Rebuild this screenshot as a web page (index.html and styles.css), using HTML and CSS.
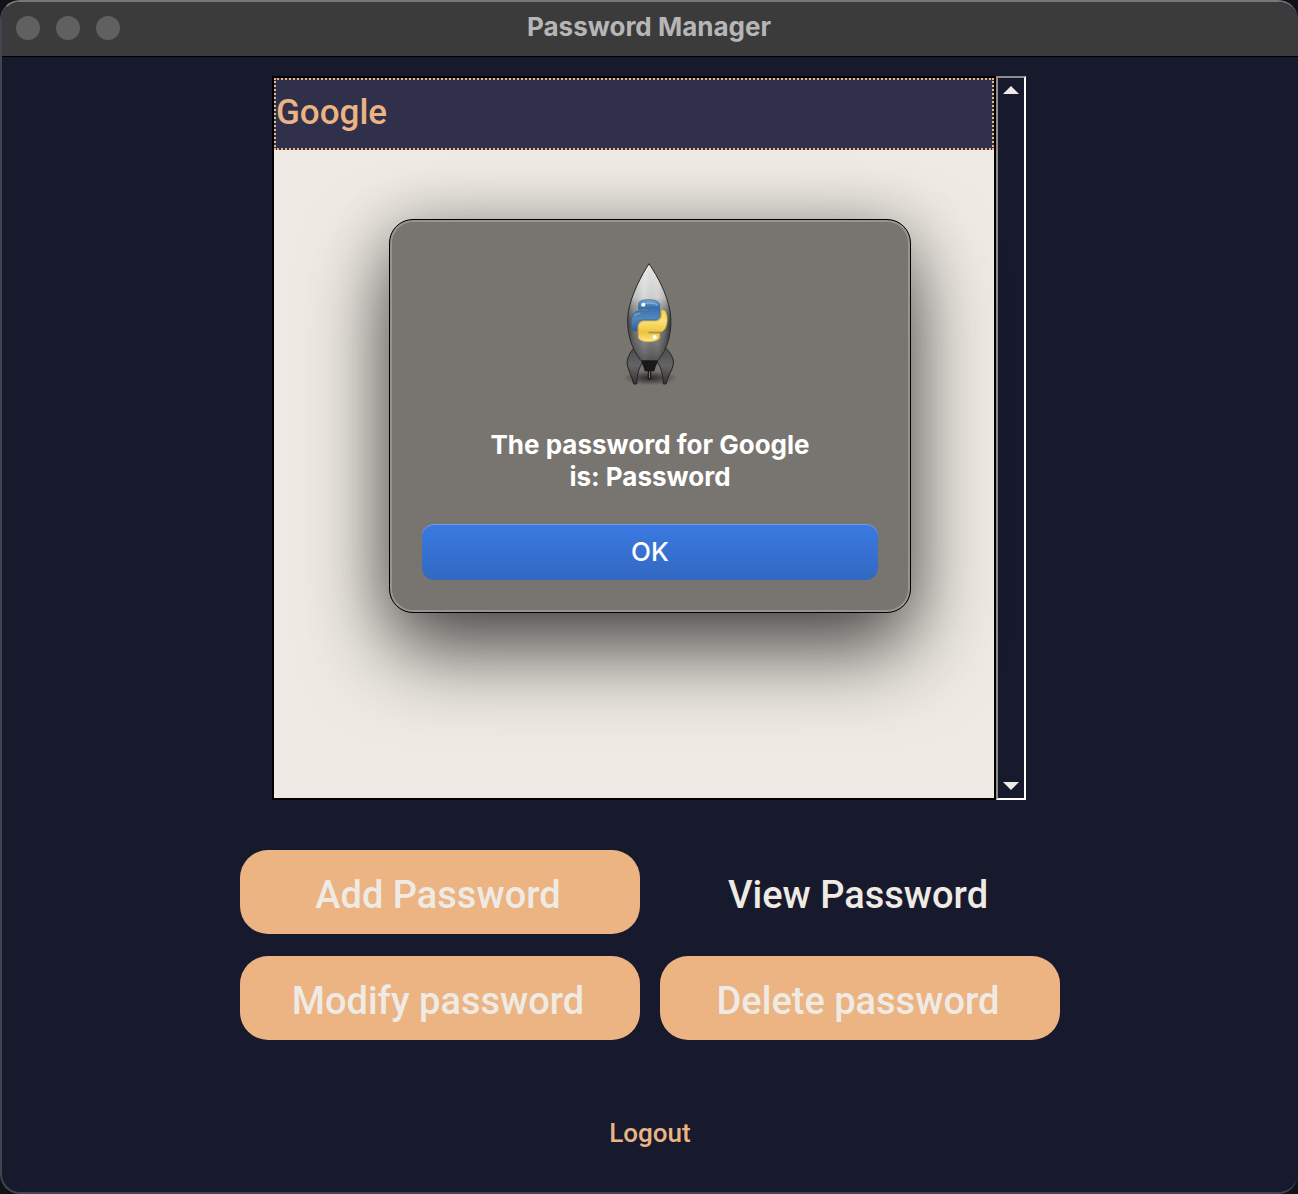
FILE: index.html
```html
<!DOCTYPE html>
<html lang="en">
<head>
<meta charset="utf-8">
<title>Password Manager</title>
<link rel="stylesheet" href="styles.css">
</head>
<body>
<div class="window">
  <header class="titlebar">
    <div class="lights"><span class="light"></span><span class="light"></span><span class="light"></span></div>
    <h1 class="title">Password Manager</h1>
  </header>
  <main class="content">
    <div class="vault">
      <ul class="list" role="listbox" aria-label="Passwords">
        <li class="item" role="option" aria-selected="true">Google</li>
      </ul>
      <div class="scrollbar">
        <button class="arrow" type="button" aria-label="Scroll up"><svg width="16" height="8" viewBox="0 0 16 8"><path d="M0 8 8 0l8 8z"/></svg></button>
        <button class="arrow" type="button" aria-label="Scroll down"><svg width="16" height="8" viewBox="0 0 16 8"><path d="M0 0h16L8 8z"/></svg></button>
      </div>
    </div>
    <div class="actions">
      <button class="action" type="button">Add Password</button>
      <button class="action pressed" type="button">View Password</button>
      <button class="action" type="button">Modify password</button>
      <button class="action" type="button">Delete password</button>
    </div>
    <button class="logout" type="button">Logout</button>

    <dialog class="alert" open aria-labelledby="message">
      <svg class="rocket" viewBox="0 0 360 435" aria-hidden="true">
        <defs>
          <linearGradient id="hull" x1="0" x2="1" y1="0" y2="0">
            <stop offset="0" stop-color="#3f3f3f"/><stop offset=".14" stop-color="#777"/><stop offset=".38" stop-color="#b0b0b0"/><stop offset=".52" stop-color="#9a9a9a"/><stop offset=".7" stop-color="#a2a2a2"/><stop offset=".88" stop-color="#676767"/><stop offset="1" stop-color="#303030"/>
          </linearGradient>
          <linearGradient id="shine" x1="0" x2="0" y1="0" y2="1">
            <stop offset="0" stop-color="#fff" stop-opacity=".75"/><stop offset=".35" stop-color="#fff" stop-opacity=".5"/><stop offset=".65" stop-color="#444" stop-opacity=".15"/><stop offset="1" stop-color="#222" stop-opacity=".6"/>
          </linearGradient>
          <linearGradient id="blue" x1="0" x2="0" y1="0" y2="1">
            <stop offset="0" stop-color="#79a8d8"/><stop offset=".25" stop-color="#3670ad"/><stop offset=".6" stop-color="#5388bd"/><stop offset="1" stop-color="#2c5f96"/>
          </linearGradient>
          <linearGradient id="yellow" x1="0" x2="0" y1="0" y2="1">
            <stop offset="0" stop-color="#f6d34e"/><stop offset=".35" stop-color="#f9e07a"/><stop offset=".7" stop-color="#efc43c"/><stop offset="1" stop-color="#fae68c"/>
          </linearGradient>
          <linearGradient id="fin" x1="0" x2="0" y1="0" y2="1">
            <stop offset="0" stop-color="#4a4a4a"/><stop offset=".5" stop-color="#646464"/><stop offset="1" stop-color="#333"/>
          </linearGradient>
          <radialGradient id="ground"><stop offset="0" stop-opacity=".65"/><stop offset="1" stop-opacity="0"/></radialGradient>
        </defs>
        <ellipse cx="180" cy="384" rx="82" ry="22" fill="url(#ground)"/>
        <path d="M134 292c-16 16-25 38-22 53 4 20 15 36 19 57h9c2-31 6-53 23-70z" fill="url(#fin)" stroke="#222" stroke-width="3"/>
        <path d="M225 292c17 16 27 35 25 50-4 22-17 36-22 60h-8c-2-31-6-53-22-70z" fill="url(#fin)" stroke="#222" stroke-width="3"/>
        <path d="M173 358h11v30h-11z" fill="#1c1c1c"/><path d="M177 362h3v22h-3z" fill="#777"/>
        <path d="M177 41C154 77 124 133 115 185c-8 52 7 111 38 147h51c31-37 45-95 36-149-9-51-36-102-63-142z" fill="url(#hull)"/>
        <path d="M177 41C154 77 124 133 115 185c-8 52 7 111 38 147h51c31-37 45-95 36-149-9-51-36-102-63-142z" fill="url(#shine)" stroke="#292929" stroke-width="3"/>
        <path d="M153 332h51l-7 18-4 14h-29l-4-14z" fill="#191919"/>
        <path d="M147 182h30v-4h-31v-17c0-16 60-16 63 1v31c0 11-8 17-18 17h-31c-12 0-20 8-20 18v15h-7c-12-4-18-56 14-61z" fill="url(#blue)" stroke="#315e8c" stroke-width="2"/>
        <path d="M214 181h8c13 7 15 56-7 64h-39v5h33v11c0 18-63 20-64 0v-30c0-12 9-18 19-18h31c13 0 19-8 19-18z" fill="url(#yellow)" stroke="#d2ae3b" stroke-width="2"/>
        <path d="M153 169c4-12 43-13 49-3M133 197c5-6 10-7 18-7" fill="none" stroke="#a8caeb" stroke-width="4" opacity=".6"/>
        <circle cx="160" cy="164" r="6" fill="#fff"/><circle cx="194" cy="261" r="6" fill="#fff"/>
      </svg>
      <p class="message" id="message">The password for Google<br>is: Password</p>
      <button class="ok" type="button">OK</button>
    </dialog>
  </main>
</div>
</body>
</html>
```
FILE: styles.css
```css
* { box-sizing: border-box; }

body {
  margin: 0;
  background: #111218;
  color: #efebe4;
  font-family: Roboto, "Liberation Sans", sans-serif;
}

button {
  padding: 0;
  border: 0;
  background: none;
  color: inherit;
  font: inherit;
}

.window {
  display: flex;
  flex-direction: column;
  min-height: 100vh;
  border: 2px solid #42444f;
  border-top-color: #777;
  border-right: 0;
  border-radius: 20px;
  background: #17192d;
  overflow: hidden;
}

.titlebar {
  display: grid;
  grid-template-columns: 1fr auto 1fr;
  align-items: center;
  height: 55px;
  padding: 0 16px 2px 14px;
  border-bottom: 1px solid #000;
  background: #3b3b3b;
}

.lights { display: flex; gap: 16px; }

.light {
  width: 24px;
  height: 24px;
  border-radius: 50%;
  background: #606060;
}

.title {
  margin: 0;
  padding-bottom: 2px;
  color: #b6b6b6;
  font: 700 26px/30px Inter, sans-serif;
}

.content {
  position: relative;
  display: flex;
  flex: 1;
  flex-direction: column;
  align-items: center;
  padding: 19px 16px 36px;
}

.vault {
  display: flex;
  padding-right: 2px;
}

.list {
  width: 724px;
  height: 724px;
  margin: 0;
  padding: 0;
  border: 2px solid #000;
  background: #efebe4;
  list-style: none;
}

.item {
  height: 72px;
  border: 2px dotted #ecb383;
  background: #30304b;
  color: #ecb383;
  font-size: 35px;
  font-weight: 500;
  line-height: 66px;
}

.scrollbar {
  display: flex;
  flex-direction: column;
  justify-content: space-between;
  width: 30px;
  border: 2px solid #fff;
  border-top-color: #8f8d88;
  border-left-color: #8f8d88;
}

.arrow {
  display: grid;
  place-items: center;
  height: 24px;
  fill: #efebe4;
}

.actions {
  display: grid;
  grid-template-columns: repeat(2, 400px);
  grid-auto-rows: 84px;
  gap: 22px 20px;
  margin-top: 50px;
}

.action {
  padding: 6px 4px 0 0;
  border-radius: 28px;
  background: #ecb383;
  font-size: 38px;
  font-weight: 500;
}

.pressed { background: none; }

.logout {
  margin-top: 76px;
  color: #ecb383;
  font-size: 26px;
  font-weight: 500;
  line-height: 34px;
}

.alert {
  position: absolute;
  inset: 162px 0 auto;
  display: flex;
  flex-direction: column;
  align-items: center;
  width: 522px;
  margin: 0 auto;
  padding: 30px 30px 32px;
  border: 1px solid #000;
  border-radius: 24px;
  background: #787570;
  box-shadow: inset 0 0 0 2px #969490, 0 38px 84px rgba(0, 0, 0, .66), 0 0 60px rgba(0, 0, 0, .2);
  color: #fff;
}

.rocket { width: 120px; height: 145px; }

.message {
  margin: 34px 0 31px;
  font: 700 26px/32px Inter, sans-serif;
  text-align: center;
}

.ok {
  align-self: stretch;
  height: 56px;
  margin: 0 2px;
  border-radius: 12px;
  background: linear-gradient(#3b7ae2, #3268c1);
  box-shadow: inset 0 1px #6e9ce8;
  font: 500 26px/52px Inter, sans-serif;
}
```
